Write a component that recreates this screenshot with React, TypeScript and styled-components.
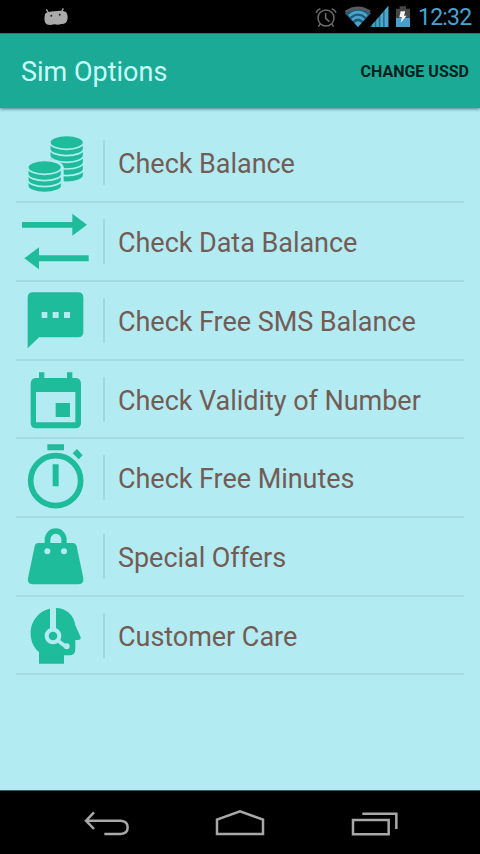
import React from "react";
import styled, { createGlobalStyle } from "styled-components";

const GlobalStyle = createGlobalStyle`
  * { box-sizing: border-box; }
  html, body { margin: 0; padding: 0; }
  body { background: #b2ebf2; font-family: Roboto, "Noto Sans", sans-serif; overflow: hidden; }
  svg { display: block; flex: none; }
`;

const Screen = styled.div`
  width: 480px;
  height: 854px;
  display: flex;
  flex-direction: column;
  background: #b2ebf2;
`;

const StatusBar = styled.header`
  height: 33px;
  flex: none;
  display: flex;
  align-items: center;
  justify-content: space-between;
  background: #000;
`;

const StatusIcons = styled.div`
  display: flex;
  align-items: center;
  padding-right: 8px;
`;

const Clock = styled.span`
  width: 54px;
  font-size: 23px;
  line-height: 33px;
  letter-spacing: -0.8px;
  color: #45a5d0;
  white-space: nowrap;
  padding-top: 1px;
`;

const AppBar = styled.div`
  height: 75px;
  flex: none;
  display: flex;
  align-items: center;
  justify-content: space-between;
  padding: 0 11px 0 21px;
  background: #1baa96;
  border-top: 1px solid #35746b;
  box-shadow: 0 1px 3px rgba(0, 50, 60, 0.6);
`;

const Title = styled.h1`
  margin: 0;
  padding-top: 2px;
  font-size: 27px;
  font-weight: 400;
  line-height: 32px;
  color: #c8fcf8;
`;

const Action = styled.button`
  margin: 0;
  padding: 2px 0 0;
  border: 0;
  background: none;
  font: 700 16px/20px Roboto, sans-serif;
  color: #04211d;
`;

const List = styled.ul`
  flex: 1;
  margin: 0;
  padding: 16.6px 16px 0;
  list-style: none;
`;

const Row = styled.li`
  height: 78.7px;
  display: flex;
  align-items: center;
  border-bottom: 2px solid #a4dce1;
`;

const Divider = styled.span`
  width: 1.5px;
  height: 45px;
  margin-left: -1px;
  background: #a0d9df;
`;

const Label = styled.span`
  padding: 3px 0 0 13.5px;
  font-size: 27px;
  line-height: 36px;
  letter-spacing: -0.04px;
  color: #735c55;
  white-space: nowrap;
`;

const NavBar = styled.nav`
  height: 64px;
  flex: none;
  background: #000;
  border-top: 1px solid #386064;
`;

const GREEN = "#1fbc9c";
const PALE = "#b2ebf2";

const Icon = ({ top, children }: { top: number; children: React.ReactNode }) => (
  <svg width="88" height="76.67" viewBox={`18 ${top} 264 230`} fill={GREEN}>
    {children}
  </svg>
);

const Coin = ({ x, y }: { x: number; y: number }) => (
  <path
    d={`M${x - 51} ${y}a51 21 0 0 1 102 0v19a51 21 0 0 1-102 0z`}
    stroke={PALE}
    strokeWidth="5"
  />
);

const CoinsIcon = () => (
  <Icon top={13}>
    {[145, 125, 105, 85, 65].map((y) => <Coin key={y} x={170} y={y} />)}
    <path d="M119 65a51 21 0 0 0 102 0" fill="none" stroke={PALE} strokeWidth="5" />
    <ellipse cx="104" cy="140" rx="57" ry="25" fill={PALE} />
    <path d="M47 140h114v47h-20V160H47z" fill={PALE} />
    {[176, 158, 140].map((y) => <Coin key={y} x={104} y={y} />)}
    <path d="M53 140a51 21 0 0 0 102 0" fill="none" stroke={PALE} strokeWidth="5" />
  </Icon>
);

const TransferIcon = () => (
  <Icon top={3}>
    <path d="M36 60H187V35L231 68 187 101V77H36zM236 160H87V136L43 169 87 202V178H236z" />
  </Icon>
);

const SmsIcon = () => (
  <Icon top={5}>
    <path d="M69 36H204Q220 36 220 52V155Q220 171 204 171H87L53 204V52Q53 36 69 36z" />
    <path fill={PALE} d="M95 95h17v18H95zM128 95h18v18h-18zM162 95h18v18h-18z" />
  </Icon>
);

const CalendarIcon = () => (
  <Icon top={5}>
    <path
      fillRule="evenodd"
      d="M87 39H103V56H171V39H187V56H196Q213 56 213 73V190Q213 207 196 207H79Q62 207 62 190V73Q62 56 79 56H87zM78 98V189H196V98z"
    />
    <path d="M137 131h43v42h-43z" />
  </Icon>
);

const TimerIcon = () => (
  <Icon top={2}>
    <circle cx="137" cy="127" r="75" fill="none" stroke={GREEN} strokeWidth="17" />
    <path d="M112 18h50v18h-50zM128 78h18v66h-18zM201 32L218 51 206 63 188 45z" />
  </Icon>
);

const BagIcon = () => (
  <Icon top={-1}>
    <path
      fillRule="evenodd"
      d="M85 74H104V64A33 34 0 0 1 170 64V74H187Q197 74 200 84L220 179Q222 198 204 198H70Q51 198 54 179L74 84Q76 74 85 74zM121 74H154V64A16 17 0 0 0 121 64z"
    />
    <circle cx="112" cy="99" r="9" fill={PALE} />
    <circle cx="162" cy="99" r="9" fill={PALE} />
  </Icon>
);

const CareIcon = () => (
  <Icon top={1}>
    <path d="M137 34C169 34 193 57 196 86L212 122Q213 130 204 130H196V157Q196 176 178 176H162V201H87V166C70 153 62 132 62 110C62 68 94 34 137 34z" />
    <path d="M144 132L168 150" stroke={PALE} strokeWidth="11" fill="none" />
    <path d="M129 30V98" stroke={PALE} strokeWidth="18" fill="none" />
    <circle cx="129" cy="118" r="19" fill={GREEN} stroke={PALE} strokeWidth="12" />
    <circle cx="170" cy="149" r="9" fill={PALE} />
  </Icon>
);

const options = [
  { label: "Check Balance", Glyph: CoinsIcon },
  { label: "Check Data Balance", Glyph: TransferIcon },
  { label: "Check Free SMS Balance", Glyph: SmsIcon },
  { label: "Check Validity of Number", Glyph: CalendarIcon },
  { label: "Check Free Minutes", Glyph: TimerIcon },
  { label: "Special Offers", Glyph: BagIcon },
  { label: "Customer Care", Glyph: CareIcon },
];

const DroidIcon = () => (
  <svg width="80" height="33" viewBox="0 0 240 99">
    <path d="M139 28l7 12M190 25l-6 12" stroke="#aaa" strokeWidth="4" />
    <path d="M135 42Q142 34 163 34Q185 29 198 36Q205 46 202 60Q198 74 183 72Q176 76 163 73Q148 77 140 73Q130 66 135 42z" fill="#aaa" />
    <circle cx="154" cy="47" r="3" fill="#222" />
    <circle cx="179" cy="44" r="3" fill="#222" />
  </svg>
);

const SystemIcons = () => (
  <svg width="118" height="33" viewBox="0 0 354 99">
    <g fill="none" stroke="#6d6d6d" strokeWidth="4.5">
      <circle cx="78" cy="54" r="24" />
      <path d="M77 39V55L88 65M48 38Q51 29 61 26M108 38Q105 29 95 26M61 72l-6 8M95 72l6 8" />
    </g>
    <path d="M134 40Q174 5 213 40L174 81z" fill="#1d5c79" />
    <g fill="none" stroke="#4da3cb">
      <path d="M137 36Q174 12 210 36" stroke="#555b5f" strokeWidth="9" />
      <path d="M147 48Q174 25 201 48" strokeWidth="8" />
      <path d="M156 60Q174 43 192 60" strokeWidth="8" />
    </g>
    <path d="M163 69Q174 58 185 69L174 81z" fill="#4da3cb" />
    <path d="M210 81L265 18V81z" fill="#26718f" />
    <path d="M217 81V73l7-8V81zM229 81V60l7-8V81zM241 81V46l8-9V81zM254 81V31l11-13V81z" fill="#4ba5cc" />
    <path d="M288 26H299V19H318V26H330V81H288z" fill="#454545" />
    <path d="M288 54H330V81H288z" fill="#47a0c9" />
    <path d="M302 34h14l-4 13h8l-18 21 4-16h-8z" fill="#f4f4f4" />
  </svg>
);

export default function App() {
  return (
    <>
      <GlobalStyle />
      <Screen>
        <StatusBar>
          <DroidIcon />
          <StatusIcons>
            <SystemIcons />
            <Clock>12:32</Clock>
          </StatusIcons>
        </StatusBar>
        <AppBar>
          <Title>Sim Options</Title>
          <Action>CHANGE USSD</Action>
        </AppBar>
        <List>
          {options.map(({ label, Glyph }) => (
            <Row key={label}>
              <Glyph />
              <Divider />
              <Label>{label}</Label>
            </Row>
          ))}
        </List>
        <NavBar>
          <svg width="480" height="63" viewBox="-180 33 1440 189" fill="none" stroke="#a8a8a8" strokeWidth="7.5">
            <path d="M102 97L78 122L102 147M78 122H182Q203 123 203 142T182 162H133" />
            <path d="M471 162V119L540 94L609 119V162z" />
            <path d="M879 120H986V163H879zM907 101H1009V147" />
          </svg>
        </NavBar>
      </Screen>
    </>
  );
}
